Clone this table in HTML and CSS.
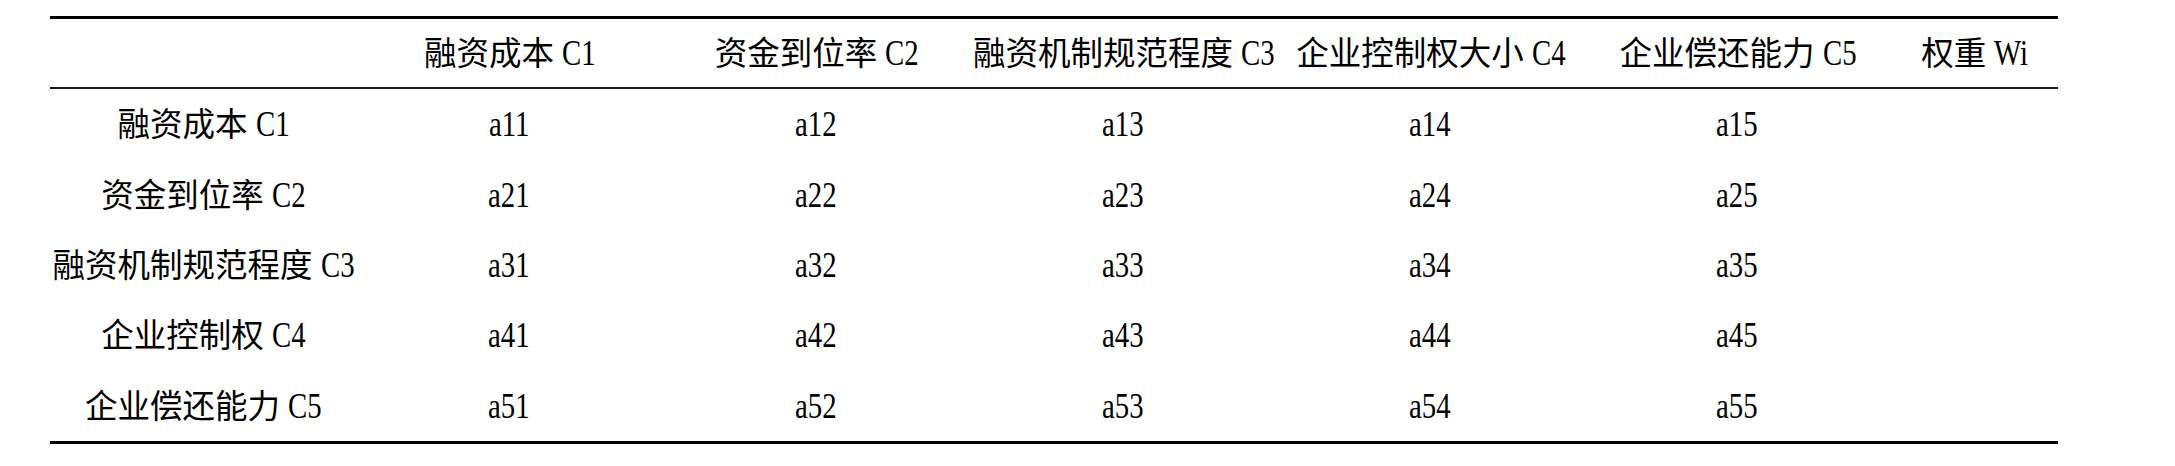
FILE: index.html
```html
<!DOCTYPE html>
<html lang="zh">
<head>
<meta charset="utf-8">
<title>判断矩阵</title>
<link rel="stylesheet" href="styles.css">
</head>
<body>
<table class="matrix">
  <colgroup>
    <col class="c-label">
    <col class="c-data"><col class="c-data"><col class="c-data"><col class="c-data"><col class="c-data">
    <col class="c-weight">
  </colgroup>
  <thead>
    <tr>
      <th></th>
      <th>融资成本 <span class="lat">C1</span></th>
      <th>资金到位率 <span class="lat">C2</span></th>
      <th>融资机制规范程度 <span class="lat">C3</span></th>
      <th>企业控制权大小 <span class="lat">C4</span></th>
      <th>企业偿还能力 <span class="lat">C5</span></th>
      <th>权重 <span class="lat">Wi</span></th>
    </tr>
  </thead>
  <tbody>
    <tr><td>融资成本 <span class="lat">C1</span></td><td><span class="lat">a11</span></td><td><span class="lat">a12</span></td><td><span class="lat">a13</span></td><td><span class="lat">a14</span></td><td><span class="lat">a15</span></td><td></td></tr>
    <tr><td>资金到位率 <span class="lat">C2</span></td><td><span class="lat">a21</span></td><td><span class="lat">a22</span></td><td><span class="lat">a23</span></td><td><span class="lat">a24</span></td><td><span class="lat">a25</span></td><td></td></tr>
    <tr><td>融资机制规范程度 <span class="lat">C3</span></td><td><span class="lat">a31</span></td><td><span class="lat">a32</span></td><td><span class="lat">a33</span></td><td><span class="lat">a34</span></td><td><span class="lat">a35</span></td><td></td></tr>
    <tr><td>企业控制权 <span class="lat">C4</span></td><td><span class="lat">a41</span></td><td><span class="lat">a42</span></td><td><span class="lat">a43</span></td><td><span class="lat">a44</span></td><td><span class="lat">a45</span></td><td></td></tr>
    <tr><td>企业偿还能力 <span class="lat">C5</span></td><td><span class="lat">a51</span></td><td><span class="lat">a52</span></td><td><span class="lat">a53</span></td><td><span class="lat">a54</span></td><td><span class="lat">a55</span></td><td></td></tr>
  </tbody>
</table>
</body>
</html>
```

FILE: styles.css
```css
html, body {
  margin: 0;
  padding: 0;
  background: #ffffff;
}

body {
  padding: 16px 0 0 50px;
  font-family: "Liberation Serif", "Noto Sans CJK SC", serif;
  font-size: 32.5px;
  color: #000000;
}

.matrix {
  width: 2008px;
  table-layout: fixed;
  border-collapse: separate;
  border-spacing: 0;
  border-top: 3px solid #000000;
  border-bottom: 3px solid #000000;
}

.c-label { width: 306px; }
.c-data { width: 307px; }
.c-weight { width: 167px; }

.matrix th,
.matrix td {
  padding: 0;
  text-align: center;
  vertical-align: middle;
  white-space: nowrap;
  font-weight: normal;
  line-height: 1;
}

.matrix th {
  height: 68px;
  border-bottom: 2px solid #1a1a1a;
}

.matrix td {
  height: 70.4px;
}

.lat {
  display: inline-block;
  font-family: "Liberation Serif", "Times New Roman", serif;
  font-size: 36px;
  line-height: 1;
  transform: scaleX(0.8);
  transform-origin: left center;
  margin-right: -0.25em;
}
```
